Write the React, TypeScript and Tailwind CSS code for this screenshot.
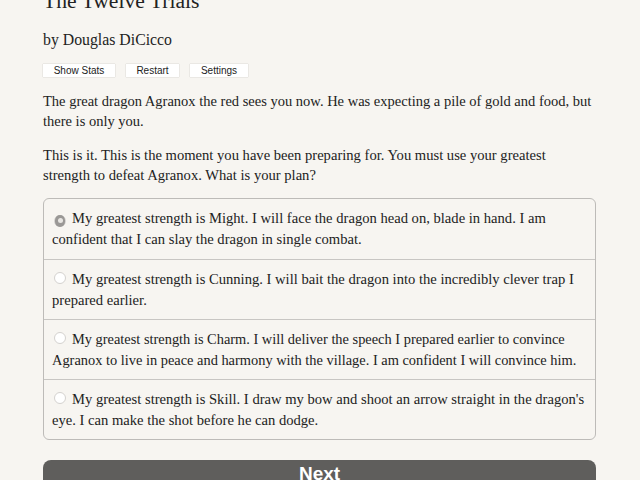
import React, { useState } from "react";

// each choice is kept as its two printed lines
const options = [
  ["My greatest strength is Might. I will face the dragon head on, blade in hand. I am", "confident that I can slay the dragon in single combat."],
  ["My greatest strength is Cunning. I will bait the dragon into the incredibly clever trap I", "prepared earlier."],
  ["My greatest strength is Charm. I will deliver the speech I prepared earlier to convince", "Agranox to live in peace and harmony with the village. I am confident I will convince him."],
  ["My greatest strength is Skill. I draw my bow and shoot an arrow straight in the dragon's", "eye. I can make the shot before he can dodge."],
];

export default function App() {
  const [choice, setChoice] = useState(0);

  return (
    <div className="h-[480px] w-[640px] overflow-hidden bg-[#f7f5f1] text-[#222]">
      <div className="ml-[43px] w-[553px] -mt-[14px] font-['Liberation_Serif',serif]">
        <h1 className="text-[21.6px] leading-[30px]">The Twelve Trials</h1>
        <h2 className="mt-[14px] text-[15.8px] leading-[20px]">by Douglas DiCicco</h2>

        <div className="mt-[14px] flex gap-[11px] font-['Liberation_Sans',sans-serif] text-[10px]">
          <button className="h-[13px] w-[72px] bg-white leading-[13px] shadow-[0_0_1px_rgba(0,0,0,0.3)]">Show Stats</button>
          <button className="h-[13px] w-[53px] bg-white leading-[13px] shadow-[0_0_1px_rgba(0,0,0,0.3)]">Restart</button>
          <button className="h-[13px] w-[58px] bg-white leading-[13px] shadow-[0_0_1px_rgba(0,0,0,0.3)]">Settings</button>
        </div>

        <p className="mt-[14px] whitespace-nowrap text-[14.5px] leading-[20px]">
          The great dragon Agranox the red sees you now. He was expecting a pile of gold and food, but
          <br />
          there is only you.
        </p>
        <p className="mt-[14px] whitespace-nowrap text-[14.6px] leading-[20px]">
          This is it. This is the moment you have been preparing for. You must use your greatest
          <br />
          strength to defeat Agranox. What is your plan?
        </p>

        <div className="mt-[13px] overflow-hidden rounded-[6px] border border-[#bdbbb8]">
          {options.map((lines, i) => (
            <label
              key={i}
              onClick={() => setChoice(i)}
              className={
                "block h-[60px] whitespace-nowrap pl-[8px] pt-[9px] leading-[20.5px] " +
                (i > 0 ? "border-t border-[#c8c6c3] " : "") +
                (i === 2 ? "text-[14.4px]" : "text-[14.6px]")
              }
            >
              <span className="mr-[6px] ml-[2px] inline-flex h-[12px] w-[12px] items-center justify-center rounded-full border border-[#d4d2cf] bg-white align-baseline">
                {choice === i && (
                  <span className="flex h-[12px] w-[12px] items-center justify-center rounded-full bg-[#9a9896]">
                    <span className="h-[5px] w-[5px] rounded-full bg-[#e8e6e3]" />
                  </span>
                )}
              </span>
              {lines[0]}
              <br />
              {lines[1]}
            </label>
          ))}
        </div>

        <button className="mt-[20px] h-[40px] w-full rounded-[8px] bg-[#5f5e5c] pb-[12px] font-['Liberation_Sans',sans-serif] text-[19px] font-bold text-white">
          Next
        </button>
      </div>
    </div>
  );
}
